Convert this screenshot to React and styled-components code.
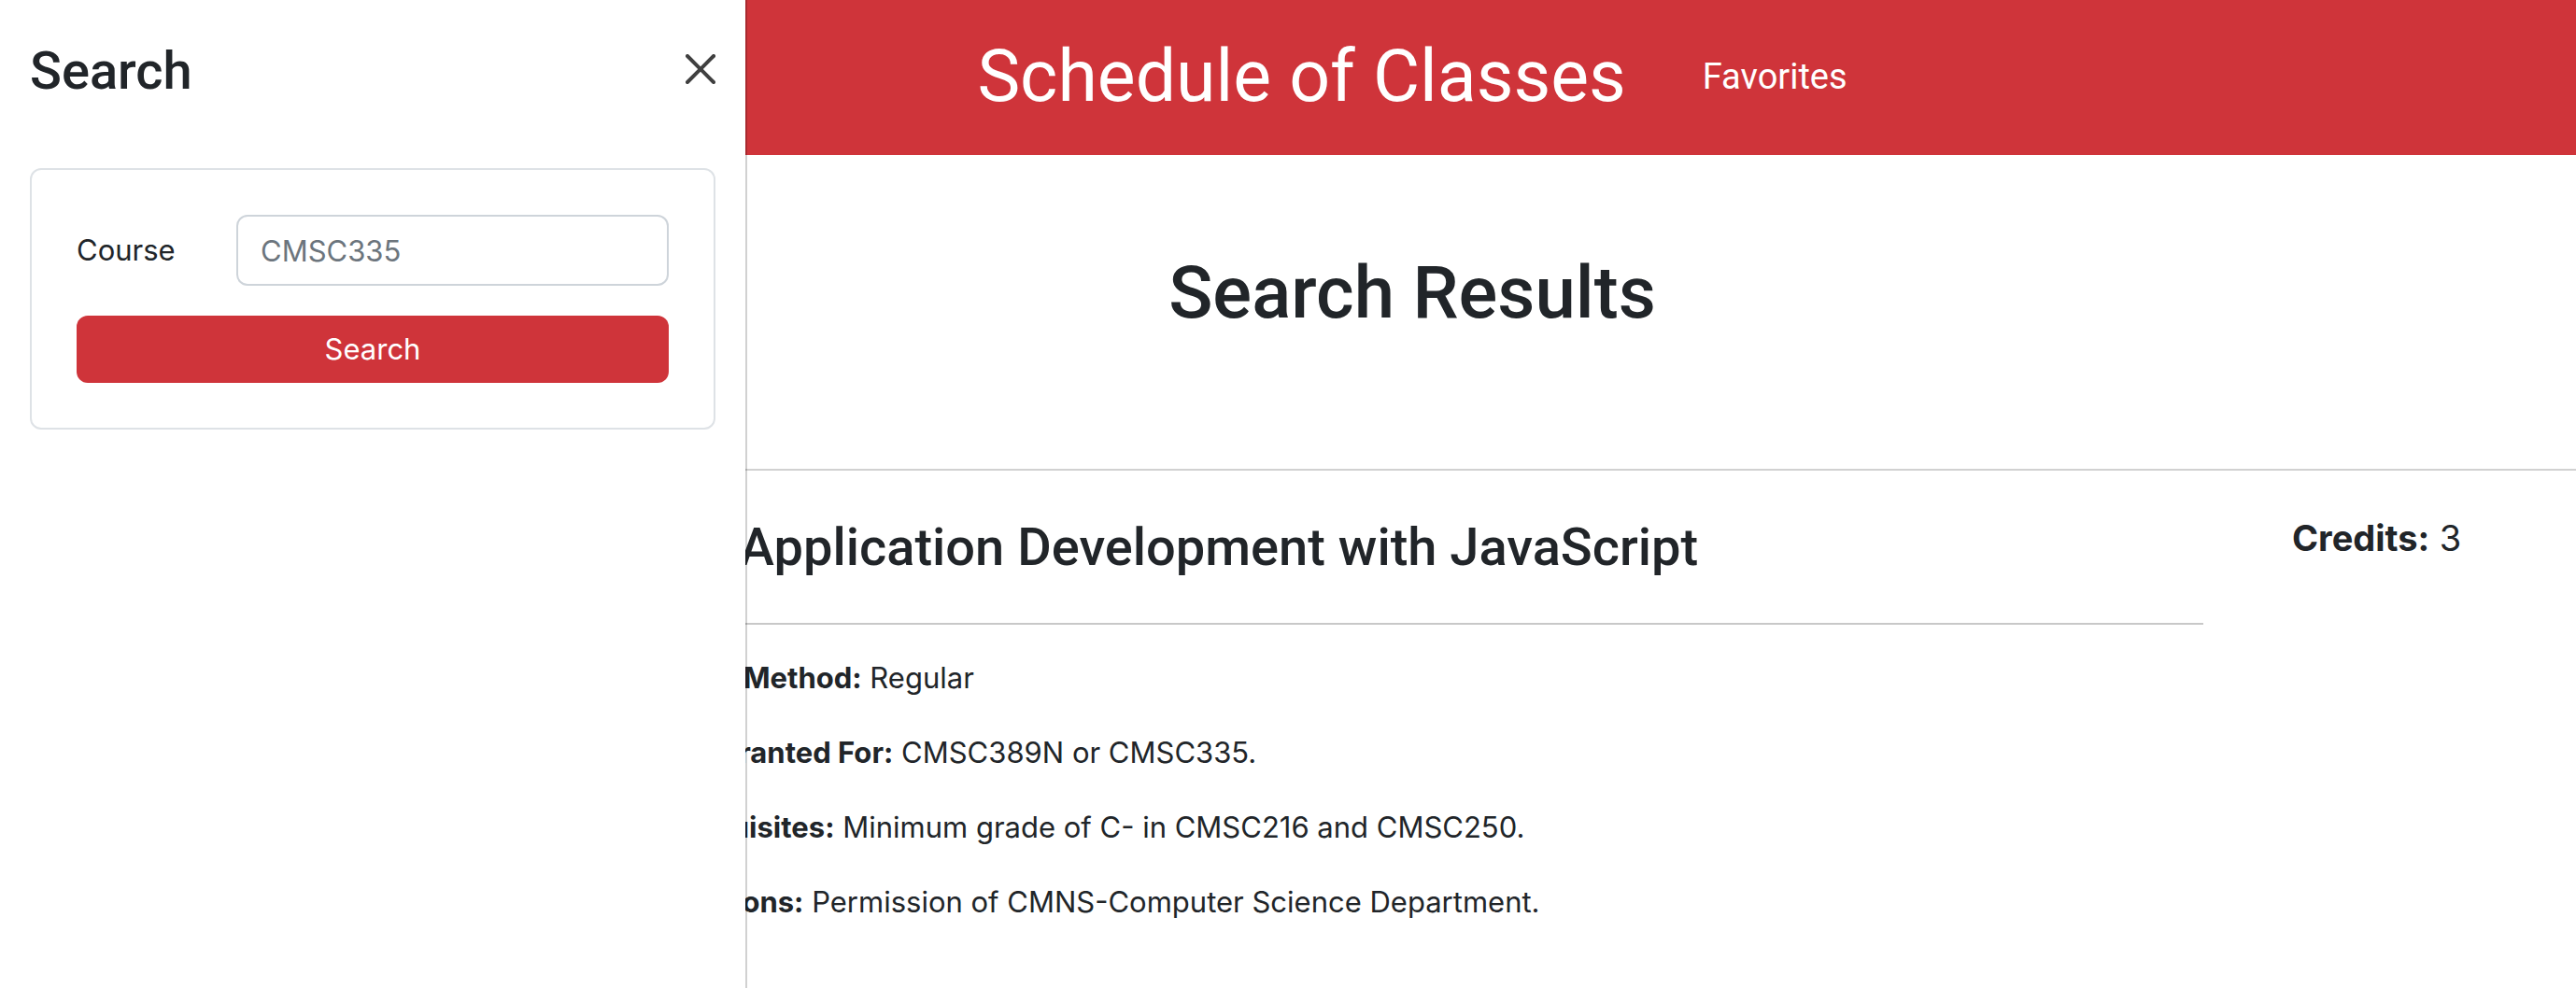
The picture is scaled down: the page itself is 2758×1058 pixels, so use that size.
import React from "react";
import styled, { createGlobalStyle } from "styled-components";

const displayFont = `Roboto, "Liberation Sans", sans-serif`;

const GlobalStyle = createGlobalStyle`
  *, *::before, *::after { box-sizing: border-box; }
  body {
    margin: 0;
    background: #fff;
    color: #212529;
    font-family: Inter, "Liberation Sans", sans-serif;
    font-size: 31px;
    line-height: 48px;
  }
`;

const Header = styled.header`
  display: flex;
  align-items: center;
  justify-content: center;
  gap: 82px;
  min-height: 166px;
  padding: 0 0 2px 266px;
  background: #cf343a;
`;

const HeaderLink = styled.a`
  color: #fff;
  text-decoration: none;
  white-space: nowrap;
  font-family: ${displayFont};
  font-size: ${(p) => (p.$brand ? "77px" : "38px")};
  line-height: ${(p) => (p.$brand ? "120px" : "60px")};
`;

const Results = styled.main`
  display: flex;
  flex-direction: column;
`;

const PageTitle = styled.h1`
  margin: 0;
  padding: 100px 0 140px 266px;
  text-align: center;
  font-family: ${displayFont};
  font-size: 78px;
  font-weight: 500;
  line-height: 96px;
`;

const Course = styled.article`
  display: grid;
  grid-template-columns: minmax(0, 1fr) 304px;
  column-gap: 95px;
  padding: 32px 0 32px 668px;
  border-top: 2px solid #d1d1d1;
`;

const CourseTitle = styled.h2`
  margin: 0;
  padding: 16px 0 47px;
  border-bottom: 2px solid #c8c8c8;
  font-family: ${displayFont};
  font-size: 56px;
  font-weight: 500;
  line-height: 68px;
`;

const Details = styled.div`
  display: flex;
  flex-direction: column;
  gap: 32px;
  padding-top: 33px;
`;

const Detail = styled.p`
  margin: 0;
`;

const Credits = styled.p`
  margin: 0;
  padding-top: 10px;
  font-size: 38px;
  line-height: 60px;
`;

const Offcanvas = styled.aside`
  position: fixed;
  inset: 0 auto 0 0;
  width: 800px;
  max-width: 100%;
  padding: 34px 32px 32px;
  background: #fff;
  background-clip: padding-box;
  border-right: 2px solid rgba(0, 0, 0, 0.18);
`;

const OffcanvasHeader = styled.div`
  display: flex;
  align-items: center;
  justify-content: space-between;
  padding-bottom: 62px;
`;

const OffcanvasTitle = styled.h2`
  margin: 0;
  font-family: ${displayFont};
  font-size: 56px;
  font-weight: 500;
  line-height: 84px;
`;

const CloseButton = styled.button`
  display: flex;
  padding: 0 0 4px;
  border: 0;
  background: transparent;
  color: #404040;
  cursor: pointer;
`;

const SearchForm = styled.form`
  display: flex;
  flex-direction: column;
  gap: 32px;
  padding: 48px;
  border: 2px solid #dee2e6;
  border-radius: 12px;
`;

const Field = styled.div`
  display: grid;
  grid-template-columns: 171px minmax(0, 1fr);
  align-items: center;
`;

const TextInput = styled.input`
  width: 100%;
  height: 76px;
  padding: 0 24px;
  border: 2px solid #ced4da;
  border-radius: 12px;
  background: #fff;
  color: inherit;
  font: inherit;
  &::placeholder {
    color: #6c757d;
    opacity: 1;
  }
`;

const SubmitButton = styled.button`
  height: 72px;
  border: 0;
  border-radius: 12px;
  background: #cf343a;
  color: #fff;
  font: inherit;
  cursor: pointer;
`;

const details = [
  ["Grading Method:", "Regular"],
  ["Credit Granted For:", "CMSC389N or CMSC335."],
  ["Pre-requisites:", "Minimum grade of C- in CMSC216 and CMSC250."],
  ["Restrictions:", "Permission of CMNS-Computer Science Department."],
];

export default function App() {
  return (
    <>
      <GlobalStyle />
      <Header>
        <HeaderLink href="#" $brand>Schedule of Classes</HeaderLink>
        <HeaderLink href="#favorites">Favorites</HeaderLink>
      </Header>
      <Results>
        <PageTitle>Search Results</PageTitle>
        <Course>
          <div>
            <CourseTitle>Web Application Development with JavaScript</CourseTitle>
            <Details>
              {details.map(([term, text]) => (
                <Detail key={term}>
                  <strong>{term}</strong> {text}
                </Detail>
              ))}
            </Details>
          </div>
          <Credits>
            <strong>Credits:</strong> 3
          </Credits>
        </Course>
      </Results>
      <Offcanvas aria-labelledby="search-title">
        <OffcanvasHeader>
          <OffcanvasTitle id="search-title">Search</OffcanvasTitle>
          <CloseButton type="button" aria-label="Close">
            <svg width="32" height="32" viewBox="0 0 16 16" aria-hidden="true">
              <path
                fill="currentColor"
                d="M.293.293a1 1 0 0 1 1.414 0L8 6.586 14.293.293a1 1 0 1 1 1.414 1.414L9.414 8l6.293 6.293a1 1 0 0 1-1.414 1.414L8 9.414l-6.293 6.293a1 1 0 0 1-1.414-1.414L6.586 8 .293 1.707a1 1 0 0 1 0-1.414z"
              />
            </svg>
          </CloseButton>
        </OffcanvasHeader>
        <SearchForm onSubmit={(e) => e.preventDefault()}>
          <Field>
            <label htmlFor="course">Course</label>
            <TextInput id="course" name="course" type="text" placeholder="CMSC335" />
          </Field>
          <SubmitButton type="submit">Search</SubmitButton>
        </SearchForm>
      </Offcanvas>
    </>
  );
}
